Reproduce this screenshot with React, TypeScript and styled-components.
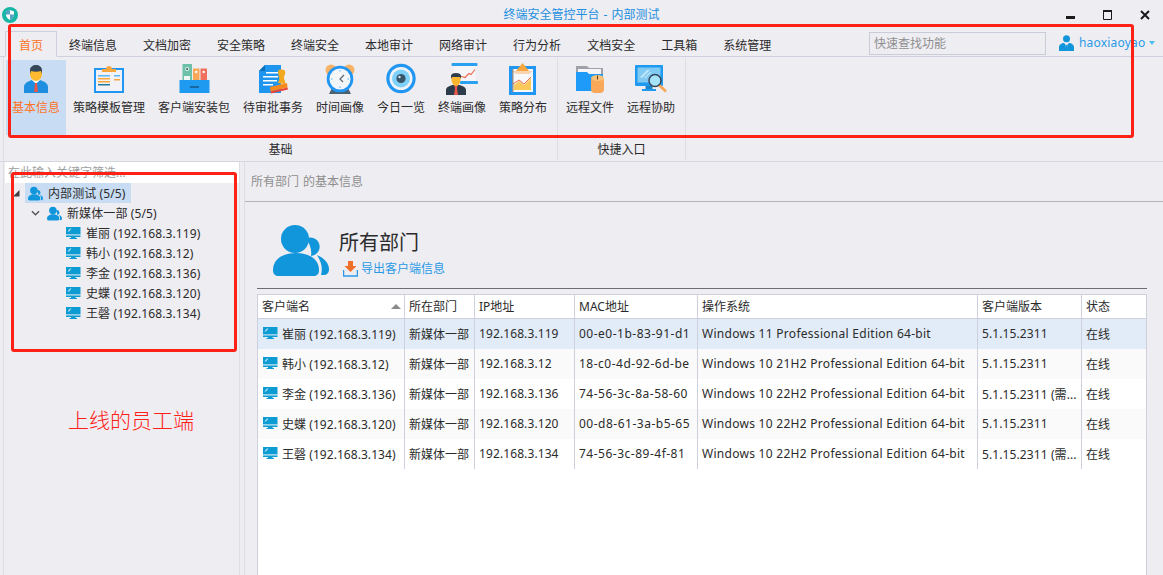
import React from 'react';
import styled, { createGlobalStyle } from 'styled-components';

const colors = {
  window: '#eeedf2',
  line: '#cfd0de',
  lightLine: '#dddde4',
  text: '#2b2b2b',
  blue: '#1296db',
  link: '#2a9ae6',
  orange: '#ff7326',
  red: '#ff2116',
};

const GlobalStyle = createGlobalStyle`
  html, body {
    margin: 0;
    padding: 0;
    background: ${colors.window};
  }
  * {
    box-sizing: border-box;
  }
`;

const Page = styled.div`
  position: relative;
  width: 1163px;
  height: 575px;
  overflow: hidden;
  display: flex;
  flex-direction: column;
  background: ${colors.window};
  color: ${colors.text};
  font-family: 'Noto Sans', 'Noto Sans CJK SC', sans-serif;
  font-size: 12px;
`;

/* title bar */
const TitleBar = styled.div`
  height: 31px;
  display: grid;
  grid-template-columns: 1fr auto 1fr;
  align-items: center;
  flex: none;
`;

const LogoWrap = styled.div`
  padding: 0 0 2px 2px;
  display: flex;
`;

const Title = styled.div`
  color: #1c8fe0;
  line-height: 29px;
  padding-bottom: 2px;
  word-spacing: 1px;
`;

const WindowButtons = styled.div`
  display: flex;
  justify-content: flex-end;
  padding-bottom: 2px;
`;

const WindowButton = styled.div`
  width: 37px;
  display: flex;
  justify-content: center;
`;

/* tabs */
const TabRow = styled.div`
  height: 26px;
  flex: none;
  display: flex;
  align-items: stretch;
  padding-left: 6px;
  border-bottom: 1px solid ${colors.line};
`;

const Tab = styled.div<{ $active?: boolean }>`
  padding: 0 13px;
  height: 26px;
  line-height: 27px;
  white-space: nowrap;
  border: 1px solid ${(p) => (p.$active ? colors.line : 'transparent')};
  border-bottom: ${(p) => (p.$active ? `1px solid ${colors.window}` : 'none')};
  margin: 0 -1px;
  color: ${(p) => (p.$active ? colors.orange : colors.text)};
`;

const SearchBox = styled.input`
  width: 177px;
  height: 23px;
  margin: 1px 0 0 auto;
  padding: 0 4px;
  border: 1px solid #c8cbd8;
  background: ${colors.window};
  font: inherit;
  outline: none;
  &::placeholder {
    color: #8f8f8f;
    opacity: 1;
  }
`;

const UserBox = styled.div`
  width: 117px;
  display: flex;
  align-items: center;
  padding: 0 0 2px 13px;
  color: ${colors.link};
`;

const UserName = styled.span`
  margin: 0 4px 0 5px;
  letter-spacing: 0.2px;
`;

const Caret = styled.span`
  border-left: 3px solid transparent;
  border-right: 3px solid transparent;
  border-top: 4px solid #4cbcf4;
`;

/* ribbon */
const Ribbon = styled.div`
  height: 105px;
  flex: none;
  display: flex;
  margin-left: 3px;
  border-left: 1px solid ${colors.lightLine};
  padding-top: 1px;
  position: relative;
  &::after {
    content: '';
    position: absolute;
    left: -4px;
    width: 1163px;
    bottom: 0;
    border-bottom: 1px solid #d6d6de;
  }
`;

const RibbonGroup = styled.div<{ $width: number }>`
  width: ${(p) => p.$width}px;
  height: 102px;
  border-right: 1px solid ${colors.lightLine};
  display: flex;
  flex-direction: column;
`;

const RibbonItems = styled.div<{ $inset: number }>`
  display: flex;
  gap: 1px;
  padding: 2px 0 0 ${(p) => p.$inset}px;
  height: 79px;
`;

const RibbonItem = styled.div<{ $selected?: boolean }>`
  height: 75px;
  padding: 3px 6px 0;
  display: flex;
  flex-direction: column;
  align-items: center;
  white-space: nowrap;
  background: ${(p) => (p.$selected ? '#c8ddf3' : 'transparent')};
  color: ${(p) => (p.$selected ? colors.orange : colors.text)};
`;

const ItemLabel = styled.div`
  margin-top: 5px;
  line-height: 16px;
`;

const GroupLabel = styled.div`
  flex: 1;
  display: flex;
  align-items: center;
  justify-content: center;
`;

/* main area */
const Body = styled.div`
  flex: 1;
  min-height: 0;
  display: flex;
  padding-left: 3px;
`;

const Sidebar = styled.div`
  width: 237px;
  flex: none;
  border-left: 1px solid ${colors.lightLine};
  border-right: 1px solid ${colors.lightLine};
  display: flex;
  flex-direction: column;
`;

const FilterInput = styled.input`
  height: 21px;
  flex: none;
  border: none;
  outline: none;
  background: #fff;
  padding: 0 3px;
  margin-left: 1px;
  font: inherit;
  &::placeholder {
    color: #a0a0a0;
    opacity: 1;
  }
`;

const TreeList = styled.div`
  letter-spacing: 0.1px;
`;

const TreeRow = styled.div<{ $depth: number }>`
  height: 20px;
  display: flex;
  align-items: center;
  padding-left: ${(p) => 8 + p.$depth * 19}px;
`;

const Toggle = styled.div`
  width: 13px;
  flex: none;
  display: flex;
  justify-content: center;
  padding-right: 4px;
`;

const TreeLabel = styled.div<{ $selected?: boolean }>`
  height: 20px;
  display: flex;
  align-items: center;
  gap: 5px;
  padding: 0 5px 0 3px;
  white-space: nowrap;
  background: ${(p) => (p.$selected ? '#c8ddf3' : 'transparent')};
`;

const Content = styled.div`
  flex: 1;
  min-width: 0;
  margin-left: 4px;
  border-left: 1px solid ${colors.lightLine};
  display: flex;
  flex-direction: column;
`;

const Breadcrumb = styled.div`
  height: 40px;
  flex: none;
  padding: 0 0 1px 6px;
  display: flex;
  align-items: center;
  color: #8e8e8e;
  word-spacing: 1px;
  border-bottom: 1px solid #b4b4b8;
`;

const Main = styled.div`
  flex: 1;
  min-height: 0;
  padding: 0 16px 0 12px;
  display: flex;
  flex-direction: column;
`;

const Summary = styled.div`
  height: 87px;
  flex: none;
  display: flex;
  padding: 20px 0 0 16px;
  border-bottom: 1px solid #6d6d74;
`;

const SummaryText = styled.div`
  margin-left: 10px;
`;

const DeptName = styled.div`
  font-size: 20px;
  line-height: 30px;
  margin-top: 6px;
`;

const ExportLink = styled.div`
  display: flex;
  align-items: center;
  gap: 3px;
  margin: 3px 0 0 4px;
  color: ${colors.link};
  line-height: 16px;
`;

const TableFrame = styled.div`
  flex: 1;
  margin-top: 5px;
  background: #fff;
  border-left: 1px solid ${colors.line};
  border-right: 1px solid ${colors.line};
  border-top: 1px solid ${colors.line};
`;

const columns = '147px 70px 100px 123px 280px 104px 64px';

const HeaderRow = styled.div`
  display: grid;
  grid-template-columns: ${columns};
  height: 24px;
  border-bottom: 1px solid ${colors.line};
`;

const HeaderCell = styled.div`
  display: flex;
  align-items: center;
  justify-content: space-between;
  padding: 0 4px 1px;
  border-right: 1px solid ${colors.line};
  &:last-child {
    border-right: none;
  }
`;

const SortArrow = styled.span`
  border-left: 5px solid transparent;
  border-right: 5px solid transparent;
  border-bottom: 5px solid #8a8a8a;
  margin-right: -1px;
`;

const DataRow = styled.div<{ $tone: string }>`
  display: grid;
  grid-template-columns: ${columns};
  height: 30px;
  background: ${(p) => p.$tone};
`;

const DataCell = styled.div<{ $spacing?: number }>`
  display: flex;
  align-items: center;
  gap: 4px;
  padding: 0 4px 1px;
  white-space: nowrap;
  overflow: hidden;
  letter-spacing: ${(p) => p.$spacing ?? 0}px;
  border-right: 1px solid ${colors.line};
  &:last-child {
    border-right: none;
  }
`;

const NameCell = styled(DataCell)`
  padding-left: 5px;
`;

/* annotations drawn over the screenshot */
const MarkBox = styled.div<{ $x: number; $y: number; $w: number; $h: number }>`
  position: absolute;
  left: ${(p) => p.$x}px;
  top: ${(p) => p.$y}px;
  width: ${(p) => p.$w}px;
  height: ${(p) => p.$h}px;
  border: 3px solid ${colors.red};
  border-radius: 3px;
  pointer-events: none;
`;

const MarkText = styled.div`
  position: absolute;
  left: 68px;
  top: 403px;
  font-size: 21px;
  line-height: 32px;
  color: ${colors.red};
  font-family: 'Noto Sans CJK SC', sans-serif;
  font-weight: 300;
`;

/* icons */
const Logo = () => (
  <svg width="16" height="16" viewBox="0 0 16 16">
    <circle cx="8" cy="8" r="8" fill="#17b5a6" />
    <path d="M8 3l4 1.4v3.2c0 2.6-1.7 4.2-4 5.4-2.3-1.200-4-2.800-4-5.400V4.400z" fill="#fff" />
    <path d="M8 3v4.500H4V4.400zM8 7.500h4c-.1 2.500-1.800 4.300-4 5.500z" fill="#1f7fb5" opacity=".75" />
  </svg>
);

const MinimizeIcon = () => (
  <svg width="10" height="10" viewBox="0 0 10 10">
    <rect x="0" y="6" width="9" height="3" fill="#1a1a1a" />
  </svg>
);

const MaximizeIcon = () => (
  <svg width="10" height="10" viewBox="0 0 10 10">
    <path d="M.5 1.500h8v8h-8z" fill="none" stroke="#1a1a1a" />
    <rect x="0" y="0" width="9" height="2" fill="#1a1a1a" />
  </svg>
);

const CloseIcon = () => (
  <svg width="10" height="10" viewBox="0 0 10 10">
    <path d="M1 1l8 8M9 1L1 9" stroke="#1a1a1a" strokeWidth="2" />
  </svg>
);

const UserIcon = () => (
  <svg width="15" height="16" viewBox="0 0 15 16">
    <circle cx="7.500" cy="3.700" r="3.500" fill="#1296db" />
    <path d="M0 16v-3.500C0 9.500 2.500 8 5 8l1.500 1.500V16zM15 16v-3.500C15 9.500 12.500 8 10 8L8.500 9.500V16zM6.800 10h1.400l.5 6H6.300z" fill="#1296db" />
  </svg>
);

const PeopleIcon = ({ size = 15 }: { size?: number }) => (
  <svg width={size} height={size} viewBox="0 0 56 56">
    <circle cx="22" cy="17" r="14" fill={colors.blue} />
    <path d="M0 48C0 37 10 31 23 31s23 6 23 17c0 4-2 6-6 6H6c-4 0-6-2-6-6z" fill={colors.blue} />
    <path d="M33 16.500A9.300 9.300 0 1 1 38 34c1-6-1-12-5-17.500zM44 33c7 3 12 8 12 14 0 4-2 6-6 6h-2c2-7 0-14-4-20z" fill={colors.blue} />
  </svg>
);

const MonitorIcon = () => (
  <svg width="15" height="13" viewBox="0 0 15 13" style={{ flex: 'none' }}>
    <rect x="0" y="0" width="14.500" height="7.500" fill="#0d9bd4" />
    <path d="M1.500 4.500L4 1.500h1.500L3 4.500z" fill="#bfe6f5" />
    <rect x="0" y="7.500" width="14.500" height="1" fill="#a8d8ec" />
    <rect x="0" y="8.500" width="14.500" height="1.500" fill="#0d9bd4" />
    <rect x="5" y="10" width="4.500" height="1" fill="#0d9bd4" />
    <rect x="3.500" y="11" width="7.500" height="1" fill="#0d9bd4" />
  </svg>
);

const ExportIcon = () => (
  <svg width="15" height="16" viewBox="0 0 15 16">
    <path d="M5 0h5v5h3.500L7.500 11 1.500 5H5z" fill="#f0702a" />
    <path d="M.5 9v6h14V9" fill="none" stroke="#2a9ae6" strokeWidth="1.500" />
  </svg>
);

const IconFrame = ({ children }: { children: React.ReactNode }) => (
  <svg width="32" height="32" viewBox="0 0 32 32">
    {children}
  </svg>
);

const ProfileIcon = () => (
  <IconFrame>
    <path d="M4 30v-6c0-4 4-5.500 8-7l4 2 4-2c4 1.500 8 3 8 7v6z" fill="#1e8fe0" />
    <path d="M12 17l4 4 4-4-1-2h-6z" fill="#fff" />
    <path d="M15 20h2l1 9h-4z" fill="#e8574a" />
    <path d="M10 11c0 4 3 7 6 7s6-3 6-7V8H10z" fill="#fdb92f" />
    <path d="M10 11V7c0-3 3-5 6-5s6 2 6 5v4l-1-3c-3 1-7 1-10 0z" fill="#35475a" />
  </IconFrame>
);

const ClipboardIcon = () => (
  <IconFrame>
    <rect x="1" y="5" width="30" height="25" fill="#2196f3" />
    <rect x="3" y="7" width="26" height="21" fill="#f2f1f5" />
    <path d="M9 9V6h4c0-4 6-4 6 0h4v3z" fill="#f8a63e" />
    <rect x="5" y="12" width="12" height="1.500" fill="#5cb8f0" />
    <rect x="5" y="15" width="12" height="1.500" fill="#f8a63e" />
    <rect x="5" y="18" width="12" height="1.500" fill="#f8a63e" />
    <rect x="5" y="21" width="12" height="1.500" fill="#1e7fa0" />
    <rect x="21" y="12" width="6" height="1.500" fill="#5cb8f0" />
    <rect x="21" y="16" width="6" height="1.500" fill="#f8a63e" />
  </IconFrame>
);

const BindersIcon = () => (
  <IconFrame>
    <rect x="4.500" y="1" width="9.500" height="17" fill="#6cc1a8" />
    <circle cx="9.200" cy="6" r="2" fill="#e8f4f0" />
    <circle cx="9.200" cy="6" r="1" fill="#33505a" />
    <rect x="6" y="13" width="6" height="4" fill="#eef7f4" />
    <rect x="15" y="5.500" width="6.500" height="12" fill="#f8a858" />
    <circle cx="18.200" cy="9" r="1.200" fill="#fff" />
    <rect x="22.500" y="5.500" width="6.500" height="12" fill="#f06f5c" />
    <circle cx="25.700" cy="9" r="1.200" fill="#fff" />
    <rect x="1.500" y="17" width="30" height="13" fill="#1e9bf0" />
    <rect x="12" y="23" width="9" height="2" fill="#17699f" />
  </IconFrame>
);

const StampIcon = () => (
  <IconFrame>
    <path d="M8 2h16v28H2V8z" fill="#1e96f0" />
    <path d="M2 8h6V2z" fill="#0d6fb8" />
    <path d="M9 9h12v1.500H9zM6 13h15v1.500H6zM6 17h14v1.500H6zM6 21h10v1.500H6z" fill="#fff" />
    <path d="M21 8c0-2 6-2 7 0 1 2-1 5-1 7 0 2 2 3 1 6l-7-1c0-2 2-3 1-6-.5-2-1-4-1-6z" fill="#f2a91f" />
    <path d="M13 24l17-4 .5 4.500-17 4z" fill="#f58a1f" />
    <path d="M13.500 28.500l17-4 .5 2-17 4z" fill="#e8443a" />
  </IconFrame>
);

const ClockIcon = () => (
  <IconFrame>
    <circle cx="7" cy="7" r="5.500" fill="#f9b366" />
    <circle cx="25" cy="7" r="5.500" fill="#f9b366" />
    <path d="M5 31l3-6h16l3 6z" fill="#4a6172" />
    <circle cx="16" cy="16" r="13.300" fill="#2196f3" />
    <circle cx="16" cy="16" r="10.500" fill="#f4f6f8" />
    <path d="M20 12l-4 4 3 3" fill="none" stroke="#5a6672" strokeWidth="1.200" />
    <path d="M16 7v1.500M16 23.500V25M7 16h1.500M23.500 16H25" stroke="#58b4f2" strokeWidth="1" />
  </IconFrame>
);

const EyeIcon = () => (
  <IconFrame>
    <circle cx="16" cy="15.500" r="14.700" fill="#2196f3" />
    <circle cx="16" cy="15.500" r="11.500" fill="#f2f3f6" />
    <circle cx="16" cy="15.500" r="9" fill="#7ed1fa" />
    <circle cx="16" cy="15.500" r="4.600" fill="#38556a" />
    <circle cx="14.500" cy="14" r="1.200" fill="#cfe6f2" />
  </IconFrame>
);

const PortraitIcon = () => (
  <IconFrame>
    <rect x="5.500" y="0" width="26" height="3" rx="1" fill="#2aa0f0" />
    <rect x="14" y="18" width="18" height="3" rx="1" fill="#2aa0f0" />
    <rect x="7.500" y="3" width="22" height="15" fill="#f5f5f8" />
    <path d="M14 13l5 1.500 4-4 2 1 4-5" fill="none" stroke="#ee6a50" strokeWidth="1.200" />
    <path d="M0 32v-5c0-3 4-4 6-5h8c2 1 6 2 6 5v5z" fill="#2c3c4a" />
    <path d="M8 22h4l-1 3 1 7H8l1-7z" fill="#e8574a" />
    <path d="M5.500 16c0 4 2 7 4.500 7s4.500-3 4.500-7v-2h-9z" fill="#fbb52e" />
    <path d="M5 16v-3c0-2 2-3 5-3s5 1 5 3v3l-1-2H6z" fill="#2c3c4a" />
  </IconFrame>
);

const ChartIcon = () => (
  <IconFrame>
    <rect x="2" y="3" width="27" height="29" fill="#2196f3" />
    <rect x="5" y="6" width="21" height="23" fill="#f8f8fa" />
    <path d="M7 22l5-4 5 4 7-7v12H7z" fill="#fbc95a" />
    <path d="M6 21l6-4 5 4 7-7" fill="none" stroke="#ee6a50" strokeWidth="1" />
    <path d="M9 8l6.500-8L22 8z" fill="#f8a63e" />
    <path d="M5 8l4 3h13l4-3z" fill="#f6c9a0" opacity=".8" />
    <rect x="5" y="6" width="1.500" height="23" fill="#3a3a3a" opacity=".55" />
  </IconFrame>
);

const FolderIcon = () => (
  <IconFrame>
    <path d="M2 7V3h11l2 2h14v6H2z" fill="#9fa0a8" />
    <rect x="4" y="6" width="23" height="6" fill="#f5f5f7" />
    <path d="M2 9h11l2 2h14v17H2z" fill="#1e9bf8" />
    <rect x="17" y="14" width="13" height="16" rx="4" fill="#f8a858" />
    <ellipse cx="23.500" cy="15" rx="6.500" ry="3" fill="#f9c27a" />
    <rect x="23" y="12.500" width="1" height="4" fill="#5a3a1a" />
  </IconFrame>
);

const RemoteIcon = () => (
  <IconFrame>
    <rect x="0" y="2" width="28" height="21" rx="1" fill="#1e9bf0" />
    <rect x="2.500" y="4.500" width="23" height="15" fill="#7fc9f2" />
    <path d="M5 14l7-7h3l-8 8zM9 15l6-6h1.500l-6 6z" fill="#bfe5f8" />
    <rect x="10.500" y="23" width="7" height="3" fill="#1a86c8" />
    <rect x="7" y="26" width="14" height="2" fill="#1e9bf0" />
    <path d="M24 22l7 6.500" stroke="#f8a858" strokeWidth="3" />
    <circle cx="20" cy="17.500" r="6" fill="#a5e3fb" stroke="#35475a" strokeWidth="1.500" />
  </IconFrame>
);

const ExpandedArrow = () => (
  <svg width="7" height="7" viewBox="0 0 7 7">
    <path d="M6.500 0v6.500H0z" fill="#404040" />
  </svg>
);

const Chevron = () => (
  <svg width="10" height="7" viewBox="0 0 10 7">
    <path d="M1 1l4 4 4-4" fill="none" stroke="#555" strokeWidth="1.500" />
  </svg>
);

const tabs = ['终端信息', '文档加密', '安全策略', '终端安全', '本地审计', '网络审计', '行为分析', '文档安全', '工具箱', '系统管理'];

const basicItems = [
  { label: '基本信息', icon: <ProfileIcon />, selected: true },
  { label: '策略模板管理', icon: <ClipboardIcon /> },
  { label: '客户端安装包', icon: <BindersIcon /> },
  { label: '待审批事务', icon: <StampIcon /> },
  { label: '时间画像', icon: <ClockIcon /> },
  { label: '今日一览', icon: <EyeIcon /> },
  { label: '终端画像', icon: <PortraitIcon /> },
  { label: '策略分布', icon: <ChartIcon /> },
];

const quickItems = [
  { label: '远程文件', icon: <FolderIcon /> },
  { label: '远程协助', icon: <RemoteIcon /> },
];

const clients = [
  { name: '崔丽', ip: '192.168.3.119', mac: '00-e0-1b-83-91-d1', os: 'Windows 11 Professional Edition 64-bit', version: '5.1.15.2311' },
  { name: '韩小', ip: '192.168.3.12', mac: '18-c0-4d-92-6d-be', os: 'Windows 10 21H2 Professional Edition 64-bit', version: '5.1.15.2311' },
  { name: '李金', ip: '192.168.3.136', mac: '74-56-3c-8a-58-60', os: 'Windows 10 22H2 Professional Edition 64-bit', version: '5.1.15.2311 (需...' },
  { name: '史蝶', ip: '192.168.3.120', mac: '00-d8-61-3a-b5-65', os: 'Windows 10 22H2 Professional Edition 64-bit', version: '5.1.15.2311' },
  { name: '王磬', ip: '192.168.3.134', mac: '74-56-3c-89-4f-81', os: 'Windows 10 22H2 Professional Edition 64-bit', version: '5.1.15.2311 (需...' },
];

const rowTones = ['#e2ecf8', '#fafafa', '#ffffff', '#fafafa', '#ffffff'];

const App = () => (
  <Page>
    <GlobalStyle />
    <TitleBar>
      <LogoWrap>
        <Logo />
      </LogoWrap>
      <Title>终端安全管控平台 - 内部测试</Title>
      <WindowButtons>
        <WindowButton><MinimizeIcon /></WindowButton>
        <WindowButton><MaximizeIcon /></WindowButton>
        <WindowButton><CloseIcon /></WindowButton>
      </WindowButtons>
    </TitleBar>

    <TabRow>
      <Tab $active>首页</Tab>
      {tabs.map((tab) => (
        <Tab key={tab}>{tab}</Tab>
      ))}
      <SearchBox placeholder="快速查找功能" />
      <UserBox>
        <UserIcon />
        <UserName>haoxiaoyao</UserName>
        <Caret />
      </UserBox>
    </TabRow>

    <Ribbon>
      <RibbonGroup $width={554}>
        <RibbonItems $inset={2}>
          {basicItems.map((item) => (
            <RibbonItem key={item.label} $selected={item.selected}>
              {item.icon}
              <ItemLabel>{item.label}</ItemLabel>
            </RibbonItem>
          ))}
        </RibbonItems>
        <GroupLabel>基础</GroupLabel>
      </RibbonGroup>
      <RibbonGroup $width={128}>
        <RibbonItems $inset={2}>
          {quickItems.map((item) => (
            <RibbonItem key={item.label}>
              {item.icon}
              <ItemLabel>{item.label}</ItemLabel>
            </RibbonItem>
          ))}
        </RibbonItems>
        <GroupLabel>快捷入口</GroupLabel>
      </RibbonGroup>
    </Ribbon>

    <Body>
      <Sidebar>
        <FilterInput placeholder="在此输入关键字筛选..." />
        <TreeList>
          <TreeRow $depth={0}>
            <Toggle><ExpandedArrow /></Toggle>
            <TreeLabel $selected>
              <PeopleIcon />
              内部测试 (5/5)
            </TreeLabel>
          </TreeRow>
          <TreeRow $depth={1}>
            <Toggle><Chevron /></Toggle>
            <TreeLabel>
              <PeopleIcon />
              新媒体一部 (5/5)
            </TreeLabel>
          </TreeRow>
          {clients.map((client) => (
            <TreeRow $depth={2} key={client.ip}>
              <Toggle />
              <TreeLabel>
                <MonitorIcon />
                {client.name} ({client.ip})
              </TreeLabel>
            </TreeRow>
          ))}
        </TreeList>
      </Sidebar>

      <Content>
        <Breadcrumb>所有部门 的基本信息</Breadcrumb>
        <Main>
          <Summary>
            <PeopleIcon size={56} />
            <SummaryText>
              <DeptName>所有部门</DeptName>
              <ExportLink>
                <ExportIcon />
                导出客户端信息
              </ExportLink>
            </SummaryText>
          </Summary>
          <TableFrame>
            <HeaderRow>
              <HeaderCell>客户端名<SortArrow /></HeaderCell>
              <HeaderCell>所在部门</HeaderCell>
              <HeaderCell>IP地址</HeaderCell>
              <HeaderCell>MAC地址</HeaderCell>
              <HeaderCell>操作系统</HeaderCell>
              <HeaderCell>客户端版本</HeaderCell>
              <HeaderCell>状态</HeaderCell>
            </HeaderRow>
            {clients.map((client, i) => (
              <DataRow key={client.ip} $tone={rowTones[i]}>
                <NameCell $spacing={0.05}>
                  <MonitorIcon />
                  {client.name} ({client.ip})
                </NameCell>
                <DataCell>新媒体一部</DataCell>
                <DataCell $spacing={0.1}>{client.ip}</DataCell>
                <DataCell $spacing={0.5}>{client.mac}</DataCell>
                <DataCell $spacing={0.28}>{client.os}</DataCell>
                <DataCell $spacing={0.1}>{client.version}</DataCell>
                <DataCell>在线</DataCell>
              </DataRow>
            ))}
          </TableFrame>
        </Main>
      </Content>
    </Body>

    <MarkBox $x={8} $y={24} $w={1126} $h={114} />
    <MarkBox $x={11} $y={172} $w={226} $h={180} />
    <MarkText>上线的员工端</MarkText>
  </Page>
);

export default App;
